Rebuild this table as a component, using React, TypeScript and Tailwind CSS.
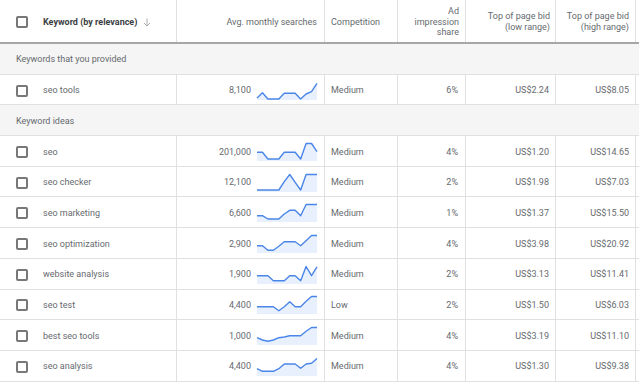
import React from 'react'

type Row = {
  keyword: string
  searches: string
  trend: number[]
  competition: string
  share: string
  low: string
  high: string
}

const provided: Row[] = [
  { keyword: 'seo tools', searches: '8,100', trend: [16, 10.7, 17, 17, 17, 11.3, 11.3, 11.3, 17, 12, 9.7, 1.3], competition: 'Medium', share: '6%', low: 'US$2.24', high: 'US$8.05' },
]

const ideas: Row[] = [
  { keyword: 'seo', searches: '201,000', trend: [9.3, 9.3, 16, 16, 16, 9.3, 9.3, 9.3, 16, 0.5, 0.5, 8.7], competition: 'Medium', share: '4%', low: 'US$1.20', high: 'US$14.65' },
  { keyword: 'seo checker', searches: '12,100', trend: [16, 16, 16, 16, 16, 7.7, 0.5, 8.3, 16, 0.5, 0.5, 0.5], competition: 'Medium', share: '2%', low: 'US$1.98', high: 'US$7.03' },
  { keyword: 'seo marketing', searches: '6,600', trend: [11.7, 11.7, 15, 15, 15, 10, 6.3, 6.3, 11.7, 0.5, 0.5, 0.5], competition: 'Medium', share: '1%', low: 'US$1.37', high: 'US$15.50' },
  { keyword: 'seo optimization', searches: '2,900', trend: [10.7, 10.7, 15.3, 15.3, 11.3, 6.7, 6.7, 6.7, 10.7, 5.7, 0.5, 0.5], competition: 'Medium', share: '4%', low: 'US$3.98', high: 'US$20.92' },
  { keyword: 'website analysis', searches: '1,900', trend: [9.7, 9.7, 9.7, 14.7, 14.7, 14.7, 9.7, 9.7, 14.7, 0.5, 9.7, 0.8], competition: 'Medium', share: '2%', low: 'US$3.13', high: 'US$11.41' },
  { keyword: 'seo test', searches: '4,400', trend: [10.7, 10.7, 10.7, 10.7, 14.7, 10.7, 5.7, 10.7, 10.7, 5.3, 0.5, 0.5], competition: 'Low', share: '2%', low: 'US$1.50', high: 'US$6.03' },
  { keyword: 'best seo tools', searches: '1,000', trend: [10.7, 13, 14.3, 13, 10.7, 10, 8.7, 8.7, 8.7, 4.3, 0.5, 0.5], competition: 'Medium', share: '4%', low: 'US$3.19', high: 'US$11.10' },
  { keyword: 'seo analysis', searches: '4,400', trend: [10.7, 13.3, 13.3, 13.3, 10.7, 6, 6, 6, 10.3, 6, 5.3, 0.5], competition: 'Medium', share: '4%', low: 'US$1.30', high: 'US$9.38' },
]

const grid = 'grid grid-cols-[177px_148px_73px_68px_90px_80px_1fr]'
const cell = 'flex items-center pt-[2px] border-r border-[#e0e0e0]'

function Checkbox() {
  return <div className="w-[12px] h-[12px] border-2 border-[#787878] rounded-[2px] bg-white" />
}

function Sparkline({ values }: { values: number[] }) {
  const w = 60
  const h = 18
  const pts = values.map((v, i) => `${((i * w) / (values.length - 1)).toFixed(2)},${v}`)
  return (
    <svg width={w} height={h} viewBox={`0 0 ${w} ${h}`} className="ml-[6px] overflow-visible">
      <polygon points={`0,${h} ${pts.join(' ')} ${w},${h}`} fill="#e8f0fe" />
      <polyline points={pts.join(' ')} fill="none" stroke="#4a86e8" strokeWidth="1.4" strokeLinejoin="round" />
    </svg>
  )
}

function SectionRow({ label }: { label: string }) {
  return (
    <div className="h-[30.7px] flex items-center pt-[2px] pl-[16px] bg-[#f5f5f5] border-b border-[#e0e0e0] text-[#666a6e]">
      {label}
    </div>
  )
}

function DataRow({ row }: { row: Row }) {
  return (
    <div className={`${grid} h-[30.7px] border-b border-[#e0e0e0] text-[#666a6e]`}>
      <div className={`${cell} pl-[16px]`}>
        <Checkbox />
        <span className="ml-[15px]">{row.keyword}</span>
      </div>
      <div className={`${cell} justify-end pr-[7px]`}>
        <span>{row.searches}</span>
        <Sparkline values={row.trend} />
      </div>
      <div className={`${cell} pl-[6px]`}>{row.competition}</div>
      <div className={`${cell} justify-end pr-[7px]`}>{row.share}</div>
      <div className={`${cell} justify-end pr-[6px]`}>{row.low}</div>
      <div className={`${cell} justify-end pr-[6px]`}>{row.high}</div>
      <div />
    </div>
  )
}

export default function App() {
  return (
    <div className="w-[639px] h-[383px] overflow-hidden bg-white text-[9px] leading-[10.7px] font-['Roboto',_'Liberation_Sans',_sans-serif]">
      <div className={`${grid} h-[44px] border-b-2 border-[#a6a6a6] text-[#666a6e]`}>
        <div className={`${cell} pl-[16px]`}>
          <Checkbox />
          <span className="ml-[15px] font-bold text-[#3c4043]">Keyword (by relevance)</span>
          <svg width="8" height="9" viewBox="0 0 8 9" className="ml-[6px]">
            <path d="M4 0.5V8M1 5l3 3 3-3" fill="none" stroke="#a8acb0" strokeWidth="1" />
          </svg>
        </div>
        <div className={`${cell} justify-end pr-[7px]`}>Avg. monthly searches</div>
        <div className={`${cell} pl-[6px]`}>Competition</div>
        <div className={`${cell} justify-end pr-[6px] text-right`}>
          Ad
          <br />
          impression
          <br />
          share
        </div>
        <div className={`${cell} justify-end pr-[5px] text-right`}>
          Top of page bid
          <br />
          (low range)
        </div>
        <div className={`${cell} justify-end pr-[6px] text-right`}>
          Top of page bid
          <br />
          (high range)
        </div>
        <div />
      </div>
      <SectionRow label="Keywords that you provided" />
      {provided.map((r) => (
        <DataRow key={r.keyword} row={r} />
      ))}
      <SectionRow label="Keyword ideas" />
      {ideas.map((r) => (
        <DataRow key={r.keyword} row={r} />
      ))}
    </div>
  )
}
